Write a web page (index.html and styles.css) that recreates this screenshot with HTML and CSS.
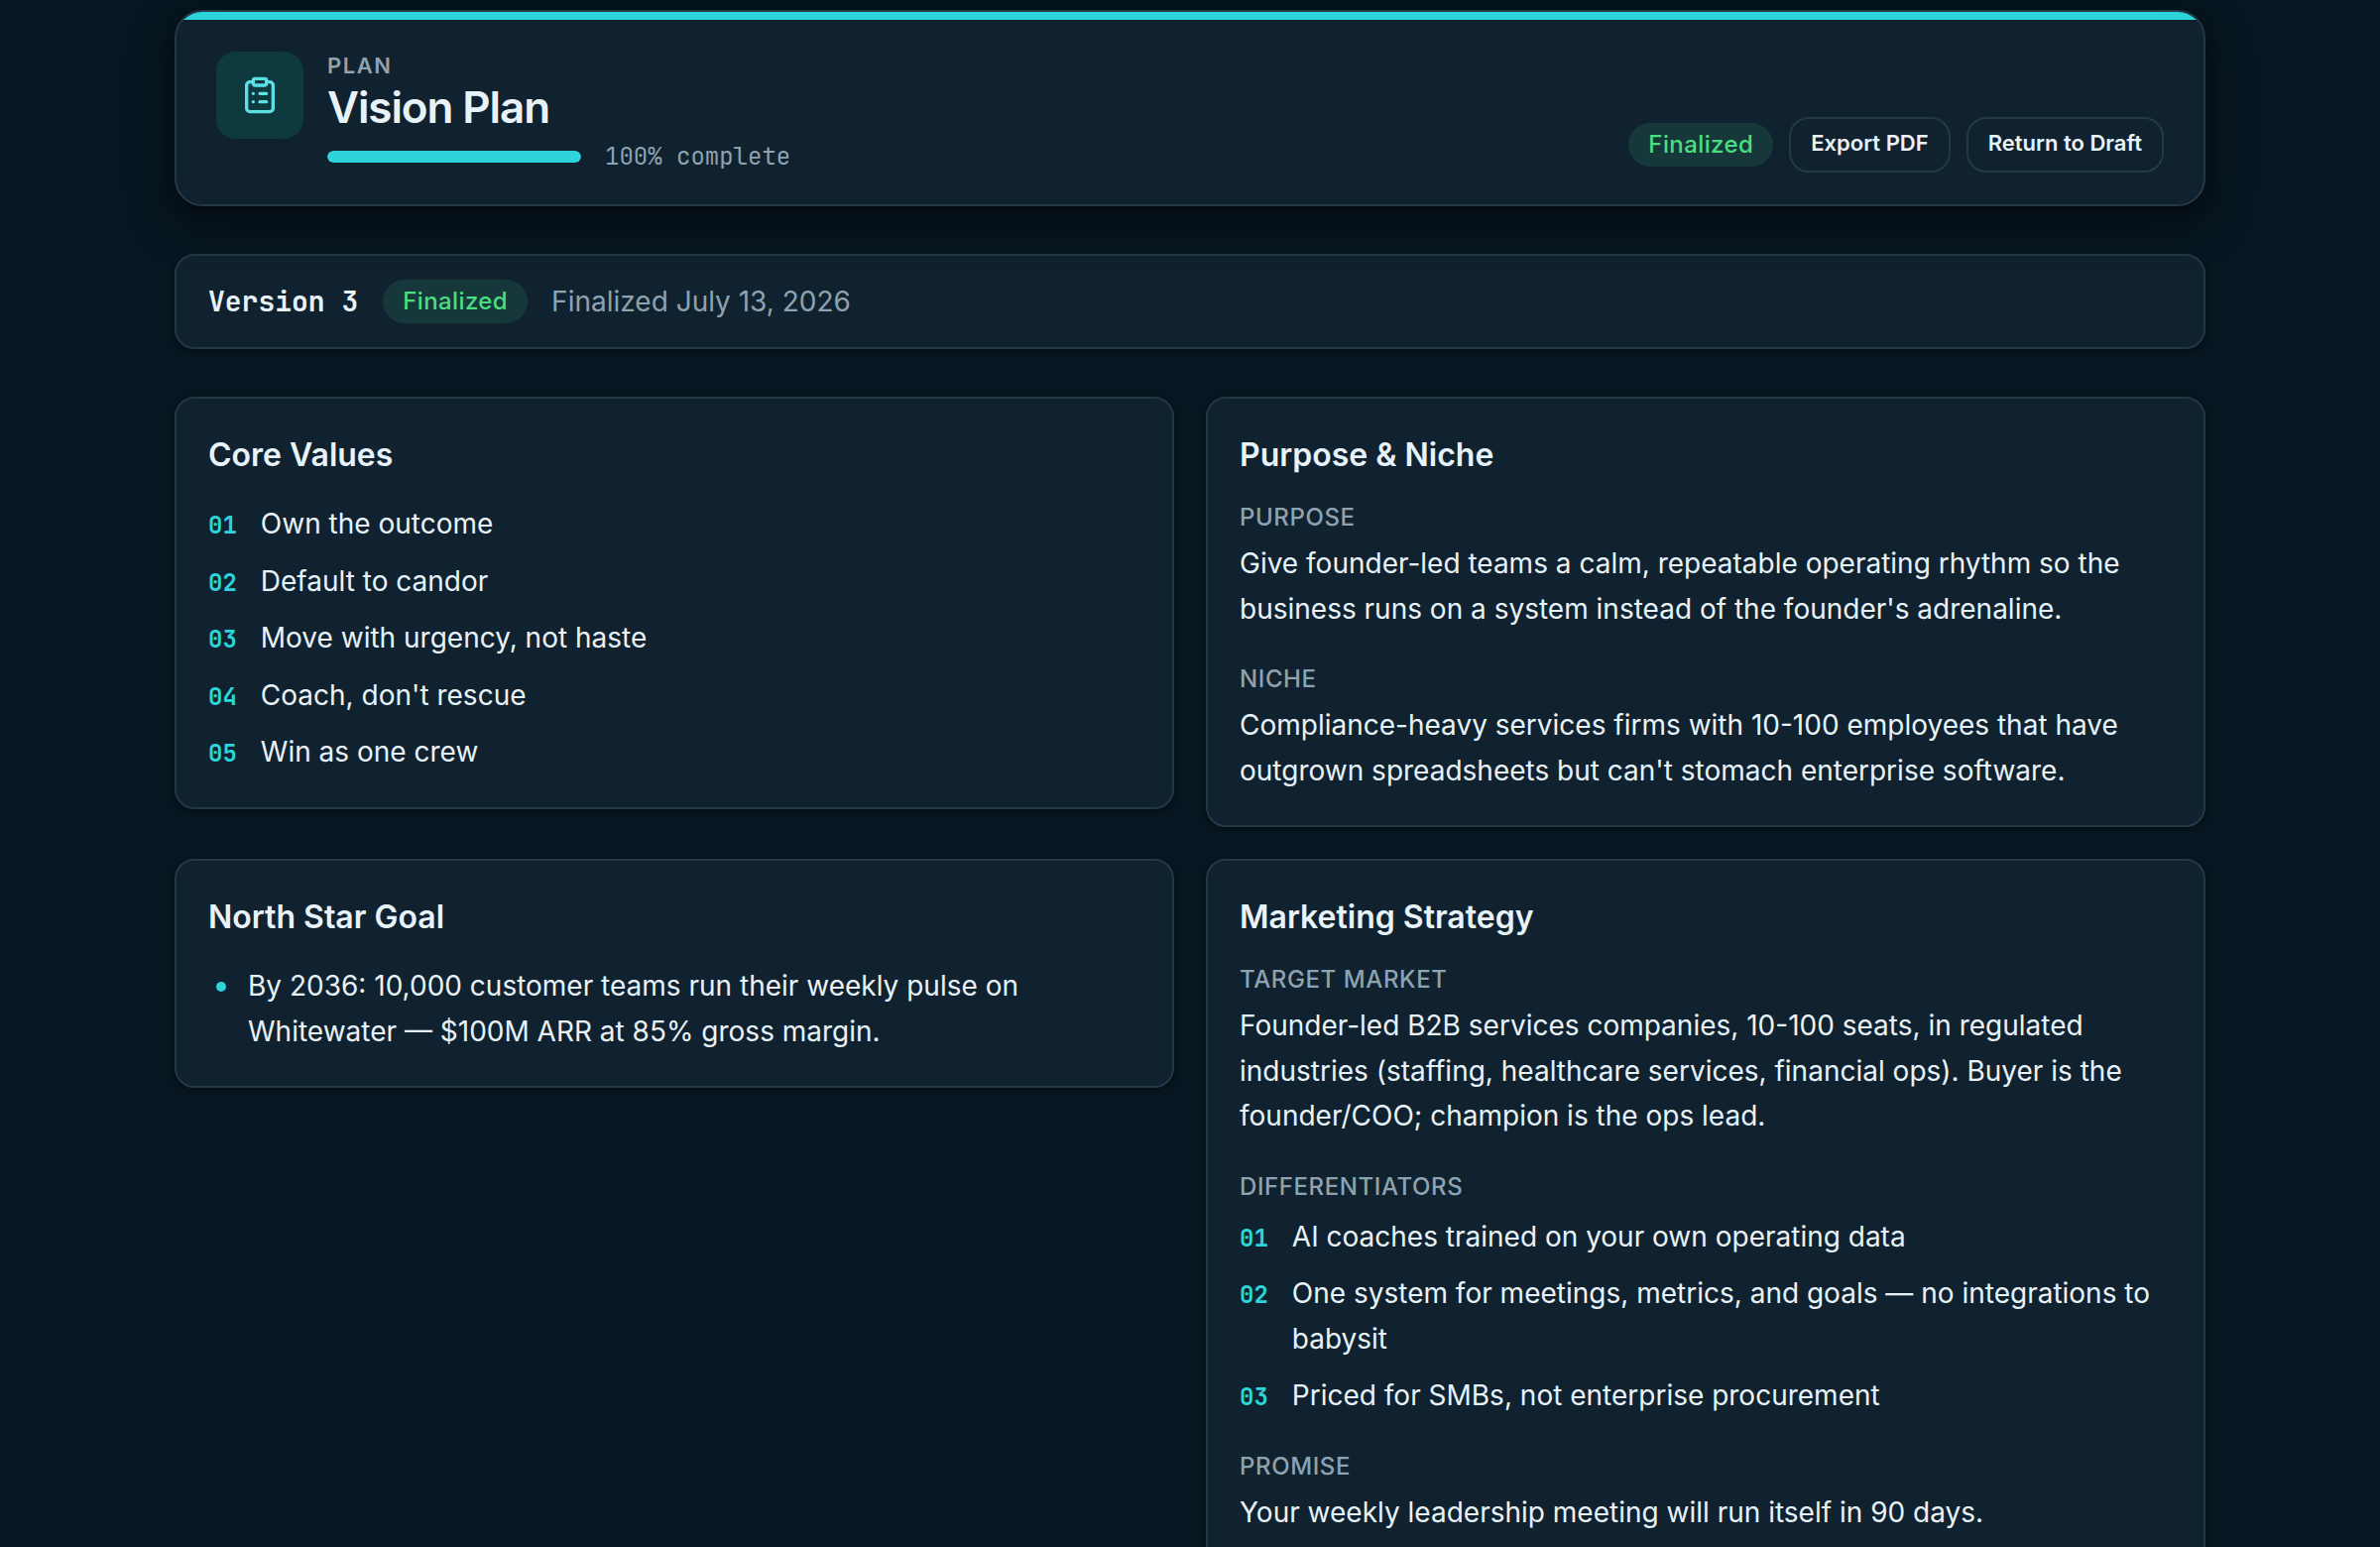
FILE: index.html
```html
<!DOCTYPE html>
<html lang="en">

  <head>
    <meta charset="UTF-8">
    <title>Vision Plan</title>
    <meta name="viewport" content="width=device-width, initial-scale=1">
    <link rel="stylesheet" href="styles.css">
  </head>

  <body>
    <main class="page">
      <header class="hero">
        <div class="hero-main">
          <div class="hero-icon">
            <svg viewBox="0 0 24 24" width="40" height="40" fill="none" stroke="currentColor" stroke-width="2"
              stroke-linecap="round" stroke-linejoin="round" aria-hidden="true">
              <rect x="8" y="2" width="8" height="4" rx="1" ry="1" />
              <path d="M16 4h2a2 2 0 0 1 2 2v14a2 2 0 0 1-2 2H6a2 2 0 0 1-2-2V6a2 2 0 0 1 2-2h2" />
              <path d="M12 11h4M12 16h4M8 11h.01M8 16h.01" />
            </svg>
          </div>
          <div>
            <div class="eyebrow">PLAN</div>
            <h1>Vision Plan</h1>
            <div class="progress">
              <div class="progress-track">
                <div class="progress-fill" style="width: 100%"></div>
              </div>
              <span class="progress-text">100% complete</span>
            </div>
          </div>
        </div>
        <div class="hero-actions">
          <span class="badge">Finalized</span>
          <button type="button" class="btn">Export PDF</button>
          <button type="button" class="btn">Return to Draft</button>
        </div>
      </header>

      <section class="card version">
        <span class="version-name">Version 3</span>
        <span class="badge">Finalized</span>
        <span class="version-date">Finalized July 13, 2026</span>
      </section>

      <div class="grid">
        <section class="card">
          <h2>Core Values</h2>
          <ol class="numbered">
            <li><span class="num">01</span><span>Own the outcome</span></li>
            <li><span class="num">02</span><span>Default to candor</span></li>
            <li><span class="num">03</span><span>Move with urgency, not haste</span></li>
            <li><span class="num">04</span><span>Coach, don't rescue</span></li>
            <li><span class="num">05</span><span>Win as one crew</span></li>
          </ol>
        </section>

        <section class="card">
          <h2>Purpose &amp; Niche</h2>
          <div class="field">
            <h3>PURPOSE</h3>
            <p>Give founder-led teams a calm, repeatable operating rhythm so the business runs on a system instead of the founder's adrenaline.</p>
          </div>
          <div class="field">
            <h3>NICHE</h3>
            <p>Compliance-heavy services firms with 10-100 employees that have outgrown spreadsheets but can't stomach enterprise software.</p>
          </div>
        </section>

        <section class="card">
          <h2>North Star Goal</h2>
          <ul class="bullets">
            <li><span class="dot"></span><span>By 2036: 10,000 customer teams run their weekly pulse on Whitewater — $100M ARR at 85% gross margin.</span></li>
          </ul>
        </section>

        <section class="card">
          <h2>Marketing Strategy</h2>
          <div class="field">
            <h3>TARGET MARKET</h3>
            <p>Founder-led B2B services companies, 10-100 seats, in regulated industries (staffing, healthcare services, financial ops). Buyer is the founder/COO; champion is the ops lead.</p>
          </div>
          <div class="field">
            <h3>DIFFERENTIATORS</h3>
            <ol class="numbered">
              <li><span class="num">01</span><span>AI coaches trained on your own operating data</span></li>
              <li><span class="num">02</span><span>One system for meetings, metrics, and goals — no integrations to babysit</span></li>
              <li><span class="num">03</span><span>Priced for SMBs, not enterprise procurement</span></li>
            </ol>
          </div>
          <div class="field">
            <h3>PROMISE</h3>
            <p>Your weekly leadership meeting will run itself in 90 days.</p>
          </div>
        </section>
      </div>
    </main>
  </body>
</html>
```

FILE: styles.css
```css
:root {
  --bg: #071620;
  --surface: #10222f;
  --border: #243846;
  --text: #e8f2f9;
  --muted: #8fa2b0;
  --accent: #2dd4dc;
  --success: #4ade80;
  --mono: "JetBrains Mono", "DejaVu Sans Mono", monospace;
}

* {
  box-sizing: border-box;
}

html {
  height: 100%;
  overflow: hidden;
}

body {
  margin: 0;
  height: 100%;
  overflow: hidden;
  background: var(--bg);
  color: var(--text);
  font-family: Inter, "Liberation Sans", sans-serif;
  font-size: 28px;
  line-height: 45.5px;
}

h1, h2, h3, p, ol, ul {
  margin: 0;
  padding: 0;
}

ol, ul {
  list-style: none;
}

.page {
  width: 2048px;
  margin: 0 auto;
  padding-top: 10px;
}

/* header */
.hero {
  display: flex;
  justify-content: space-between;
  align-items: flex-end;
  height: 198px;
  padding: 40px 40px 32px;
  position: relative;
  overflow: hidden;
  background: var(--surface);
  border: 2px solid var(--border);
  border-radius: 28px;
  box-shadow: 0 16px 48px rgba(0, 0, 0, .45), 0 4px 12px rgba(0, 0, 0, .3);
}

.hero::before {
  content: "";
  position: absolute;
  top: 0;
  left: 0;
  right: 0;
  height: 8px;
  background: var(--accent);
}

.hero-main {
  display: flex;
  gap: 24px;
  align-self: flex-start;
}

.hero-icon {
  display: flex;
  align-items: center;
  justify-content: center;
  width: 88px;
  height: 88px;
  border-radius: 20px;
  background: #0e393f;
  color: #5be0e6;
}

.eyebrow {
  font-size: 22px;
  font-weight: 600;
  line-height: 28px;
  letter-spacing: 1.5px;
  color: var(--muted);
}

h1 {
  font-size: 44px;
  font-weight: 600;
  line-height: 56px;
  letter-spacing: -1.1px;
}

.progress {
  display: flex;
  align-items: center;
  gap: 24px;
  margin-top: 6px;
  height: 32px;
}

.progress-track {
  width: 256px;
  height: 12px;
  border-radius: 6px;
  background: #1b303d;
  overflow: hidden;
}

.progress-fill {
  height: 100%;
  border-radius: 6px;
  background: var(--accent);
}

.progress-text {
  font-family: var(--mono);
  font-size: 24px;
  line-height: 32px;
  color: var(--muted);
}

.hero-actions {
  display: flex;
  align-items: center;
  gap: 16px;
}

.badge {
  height: 44px;
  padding: 0 20px;
  border-radius: 22px;
  background: #17383a;
  color: var(--success);
  font-size: 24px;
  font-weight: 500;
  line-height: 43px;
  letter-spacing: .4px;
}

.btn {
  height: 56px;
  padding: 0 20px 4px;
  border: 2px solid var(--border);
  border-radius: 20px;
  background: transparent;
  color: var(--text);
  font-family: inherit;
  font-size: 22px;
  font-weight: 600;
}

/* cards */
.card {
  padding: 32px;
  background: var(--surface);
  border: 2px solid var(--border);
  border-radius: 20px;
  box-shadow: 0 2px 6px rgba(0, 0, 0, .4);
}

.version {
  display: flex;
  align-items: center;
  gap: 24px;
  height: 96px;
  margin: 48px 0;
  padding: 0 32px;
}

.version-name {
  padding-right: 1px;
  font-family: var(--mono);
  font-weight: 700;
}

.version-date {
  padding-top: 1px;
  color: var(--muted);
}

.grid {
  display: grid;
  grid-template-columns: 1fr 1fr;
  align-items: start;
  gap: 32px;
}

h2 {
  margin-bottom: 22px;
  font-size: 32px;
  font-weight: 600;
  line-height: 50px;
}

h3 {
  margin-bottom: 8px;
  font-size: 24px;
  font-weight: 500;
  line-height: 32px;
  letter-spacing: .6px;
  color: var(--muted);
}

.field + .field {
  margin-top: 32px;
}

.numbered {
  display: flex;
  flex-direction: column;
  gap: 12px;
}

.field .numbered {
  margin-top: 12px;
}

.numbered li {
  display: flex;
  align-items: baseline;
  gap: 24px;
}

.num {
  font-family: var(--mono);
  font-size: 24px;
  font-weight: 700;
  line-height: 32px;
  color: var(--accent);
}

.bullets li {
  display: flex;
  gap: 22px;
  padding-left: 8px;
}

.dot {
  flex: none;
  width: 10px;
  height: 10px;
  margin-top: 18px;
  border-radius: 50%;
  background: var(--accent);
}
```
